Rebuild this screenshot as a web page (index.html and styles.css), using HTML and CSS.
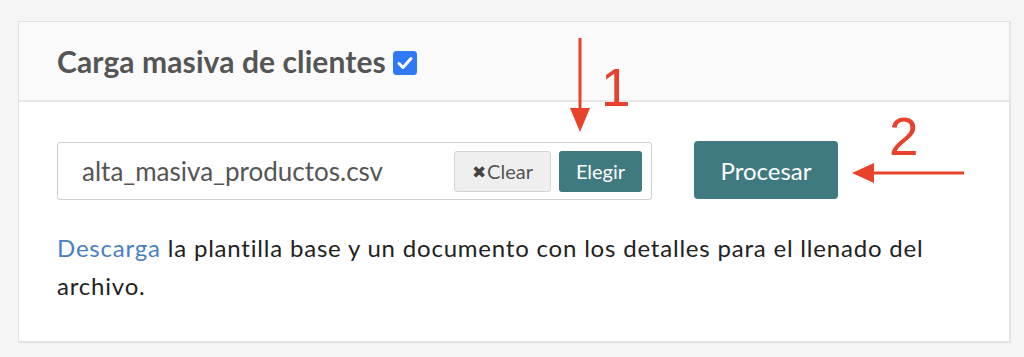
FILE: index.html
```html
<!DOCTYPE html>
<html lang="es">
<head>
<meta charset="utf-8">
<link rel="stylesheet" href="styles.css">
</head>
<body>
<div class="card">
  <div class="card-header">
    <h2 class="title">Carga masiva de clientes</h2>
    <span class="check"><svg width="24" height="24" viewBox="0 0 24 24"><rect width="24" height="24" rx="3.5" fill="#3079f4"/><path d="M6 12.5l4 4 8-9" fill="none" stroke="#fff" stroke-width="3" stroke-linecap="round" stroke-linejoin="round"/></svg></span>
  </div>
  <div class="card-body">
    <div class="row">
      <div class="file-input">
        <span class="file-name">alta_masiva_productos.csv</span>
        <button class="btn-clear"><span class="x">✖</span>Clear</button>
        <button class="btn-elegir">Elegir</button>
      </div>
      <button class="btn-procesar">Procesar</button>
    </div>
    <p class="help"><a href="#" class="link">Descarga</a> la plantilla base y un documento con los detalles para el llenado del archivo.</p>
  </div>
</div>
<svg class="annot annot-1" width="60" height="100" viewBox="0 0 60 100">
  <line x1="10" y1="0" x2="10" y2="76" stroke="#e8412c" stroke-width="3"/>
  <polygon points="0,70 20,70 10,94" fill="#e8412c"/>
  <text x="31" y="68" class="num">1</text>
</svg>
<svg class="annot annot-2" width="120" height="70" viewBox="0 0 120 70">
  <line x1="16" y1="54" x2="112" y2="54" stroke="#e8412c" stroke-width="3"/>
  <polygon points="0,54 22,44 22,64" fill="#e8412c"/>
  <text x="37" y="36" class="num">2</text>
</svg>
</body>
</html>
```
FILE: styles.css
```css
html, body {
  margin: 0;
  padding: 0;
}
body {
  background: #f5f5f5;
  padding: 21px 14px 0 18px;
  font-family: Lato, "Open Sans", sans-serif;
  position: relative;
  height: 357px;
  box-sizing: border-box;
}
.card {
  background: #fff;
  border: 1px solid #e2e2e2;
  box-shadow: 1px 1px 1px rgba(0,0,0,0.06);
  height: 321px;
  box-sizing: border-box;
}
.card-header {
  background: #fafafa;
  border-bottom: 2px solid #e8e8e8;
  height: 80px;
  box-sizing: border-box;
  display: flex;
  align-items: center;
  padding: 0 0 0 38px;
  gap: 7px;
}
.title {
  margin: 0;
  font-size: 30px;
  font-weight: 700;
  color: #555;
  letter-spacing: 0.1px;
}
.check {
  display: flex;
  margin-top: 4px;
}
.card-body {
  padding: 40px 38px 0 38px;
}
.row {
  display: flex;
  align-items: center;
  gap: 42px;
}
.file-input {
  width: 595px;
  height: 58px;
  box-sizing: border-box;
  border: 1px solid #cfcfcf;
  border-radius: 3px;
  display: flex;
  align-items: center;
  padding: 0 9px 0 24px;
}
.file-name {
  flex: 1;
  font-size: 26px;
  color: #555;
}
button {
  font-family: Lato, "Open Sans", sans-serif;
  cursor: pointer;
}
.btn-clear {
  width: 97px;
  height: 41px;
  background: #efefef;
  border: 1px solid #d4d4d4;
  border-radius: 3px;
  color: #555;
  font-size: 20px;
  padding: 0;
  display: flex;
  align-items: center;
  justify-content: center;
  gap: 1px;
}
.btn-clear .x {
  font-size: 17px;
  color: #444;
}
.btn-elegir {
  margin-left: 8px;
  width: 83px;
  height: 41px;
  background: #3e7a80;
  border: none;
  border-radius: 3px;
  color: #fff;
  font-size: 20px;
  font-weight: 400;
  padding: 0;
}
.btn-procesar {
  width: 144px;
  height: 58px;
  background: #3e7a80;
  border: none;
  border-radius: 4px;
  color: #fff;
  font-size: 24px;
  font-weight: 400;
  padding: 0;
  margin-top: -2px;
}
.help {
  margin: 29px 0 0 0;
  font-size: 24px;
  line-height: 38px;
  letter-spacing: 0.8px;
  color: #222;
}
.link {
  color: #4a7fc1;
  text-decoration: none;
}
.annot {
  position: absolute;
  overflow: visible;
}
.annot-1 {
  left: 570px;
  top: 38px;
}
.annot-2 {
  left: 852px;
  top: 119px;
}
.num {
  font-family: "Liberation Sans", Arial, sans-serif;
  font-size: 53px;
  fill: #e8412c;
}
```
